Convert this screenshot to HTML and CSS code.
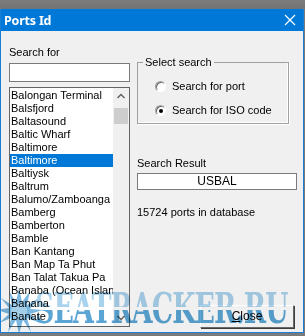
FILE: index.html
```html
<!DOCTYPE html>
<html>
<head>
<meta charset="utf-8">
<link rel="stylesheet" href="styles.css">
</head>
<body>
<div class="desk"></div>
<div class="window">
  <div class="titlebar">
    <span class="title">Ports Id</span>
    <svg class="close-x" width="12" height="12" viewBox="0 0 12 12"><path d="M1 1L11 11M11 1L1 11" stroke="#fff" stroke-width="1.2"/></svg>
  </div>
  <div class="content">
    <div class="left">
      <div class="label">Search for</div>
      <div class="textbox"></div>
      <div class="listbox">
        <div class="items">
          <div class="item">Balongan Terminal</div>
          <div class="item">Balsfjord</div>
          <div class="item">Baltasound</div>
          <div class="item">Baltic Wharf</div>
          <div class="item">Baltimore</div>
          <div class="item sel">Baltimore</div>
          <div class="item">Baltiysk</div>
          <div class="item">Baltrum</div>
          <div class="item">Balumo/Zamboanga</div>
          <div class="item">Bamberg</div>
          <div class="item">Bamberton</div>
          <div class="item">Bamble</div>
          <div class="item">Ban Kantang</div>
          <div class="item">Ban Map Ta Phut</div>
          <div class="item">Ban Talat Takua Pa</div>
          <div class="item">Banaba (Ocean Islan</div>
          <div class="item">Banana</div>
          <div class="item">Banate</div>
        </div>
        <div class="scrollbar">
          <svg class="arrow" width="16" height="16" viewBox="0 0 16 16"><path d="M4.5 9.5L8 6L11.5 9.5" fill="none" stroke="#606060" stroke-width="1.4"/></svg>
          <div class="track"><div class="thumb"></div></div>
          <svg class="arrow" width="16" height="16" viewBox="0 0 16 16"><path d="M4.5 6.5L8 10L11.5 6.5" fill="none" stroke="#606060" stroke-width="1.4"/></svg>
        </div>
      </div>
    </div>
    <div class="right">
      <fieldset class="group">
        <legend>Select search</legend>
        <div class="radio-row"><span class="radio"></span>Search for port</div>
        <div class="radio-row"><span class="radio on"></span>Search for ISO code</div>
      </fieldset>
      <div class="label result-label">Search Result</div>
      <div class="resultbox">USBAL</div>
      <div class="count">15724 ports in database</div>
      <div class="btn-row"><div class="button"><u>C</u>lose</div></div>
    </div>
  </div>
  <div class="watermark">
    <svg class="star" width="46" height="50" viewBox="0 0 46 50">
      <polygon fill="#5ba6d6" points="22,2 25,16 33,5 30,19 42,12 33,23 46,24 33,28 43,37 30,32 34,46 26,34 22,48 19,34 11,46 14,32 2,37 12,28 0,24 12,22 4,12 15,19 12,5 19,16"/>
      <circle cx="22" cy="25" r="8" fill="#8cc3e6"/>
    </svg>
    <span class="wm-text">SEATRACKER.RU</span>
  </div>
</div>
</body>
</html>
```
FILE: styles.css
```css
html, body {
  margin: 0;
  padding: 0;
}
body {
  width: 305px;
  height: 336px;
  overflow: hidden;
  background: #7a7a7a;
  font-family: "Liberation Sans", Arial, sans-serif;
  font-size: 11px;
  color: #000;
}
.desk {
  height: 9px;
  background: linear-gradient(#7c7c7c, #747474);
}
.window {
  position: relative;
  width: 302px;
  height: 323px;
  border: 1px solid #1a7fd4;
  border-top: none;
  background: #f0f0f0;
  display: flex;
  flex-direction: column;
  overflow: hidden;
}
.titlebar {
  height: 22px;
  background: #0078d7;
  display: flex;
  align-items: center;
  justify-content: space-between;
  padding: 0 6px 0 3px;
}
.title {
  color: #fff;
  font-family: "Noto Sans", "Open Sans", sans-serif;
  font-weight: bold;
  font-size: 12.5px;
  letter-spacing: -0.2px;
}
.close-x {
  margin-right: 1px;
}
.content {
  display: flex;
  gap: 7px;
  padding: 0 0 0 8px;
  flex: 1;
}
.left {
  width: 121px;
  display: flex;
  flex-direction: column;
}
.label {
  height: 13px;
  line-height: 13px;
}
.left .label {
  margin-top: 15px;
}
.textbox {
  margin-top: 4px;
  height: 17px;
  border: 1px solid #7a7a7a;
  background: #fff;
}
.listbox {
  margin-top: 5px;
  height: 237px;
  border: 1px solid #646464;
  background: #fff;
  display: flex;
  padding-top: 1px;
  overflow: hidden;
}
.items {
  flex: 1;
  overflow: hidden;
}
.item {
  height: 13px;
  line-height: 13px;
  padding-left: 1px;
  white-space: nowrap;
}
.item.sel {
  background: #0078d7;
  color: #fff;
}
.scrollbar {
  width: 16px;
  background: #f0f0f0;
  display: flex;
  flex-direction: column;
  margin-top: -1px;
}
.arrow {
  display: block;
  height: 17px;
}
.track {
  flex: 1;
}
.thumb {
  margin: 3px 1px 0 1px;
  height: 16px;
  background: #cdcdcd;
}
.right {
  width: 160px;
  display: flex;
  flex-direction: column;
}
.group {
  margin: 25px 0 0 0;
  width: 150px;
  height: 66px;
  border: 1px solid #a0a0a0;
  box-shadow: inset -1px -1px 0 #fff, 1px 1px 0 #fff;
  padding: 0;
  box-sizing: content-box;
}
.group legend {
  margin-left: 5px;
  padding: 0 2px;
  line-height: 13px;
}
.radio-row {
  display: flex;
  align-items: center;
  height: 13px;
  line-height: 13px;
  padding-left: 17px;
  margin-top: 11px;
}
.radio-row + .radio-row {
  margin-top: 11px;
}
.radio {
  width: 11px;
  height: 11px;
  border-radius: 50%;
  box-sizing: border-box;
  background: #fff;
  border: 1px solid;
  border-color: #a0a0a0 #fff #fff #a0a0a0;
  box-shadow: inset 1px 1px 0 #696969;
  margin-right: 6px;
  position: relative;
}
.radio.on::after {
  content: "";
  position: absolute;
  left: 3px;
  top: 3px;
  width: 4px;
  height: 4px;
  border-radius: 50%;
  background: #000;
}
.result-label {
  margin-top: 33px;
}
.resultbox {
  margin-top: 3px;
  height: 15px;
  border: 1px solid #7a7a7a;
  background: #fff;
  text-align: center;
  line-height: 15px;
  font-size: 12px;
}
.count {
  margin-top: 16px;
  line-height: 13px;
}
.btn-row {
  margin-top: auto;
  margin-bottom: 4px;
  display: flex;
  justify-content: flex-end;
  padding-right: 3px;
}
.button {
  width: 92px;
  height: 21px;
  line-height: 21px;
  text-align: center;
  background: #f0f0f0;
  border: 1px solid;
  border-color: #fff #696969 #696969 #fff;
  box-shadow: 1px 1px 0 #3c3c3c;
  font-size: 12px;
}
.watermark {
  position: absolute;
  left: -4px;
  bottom: -4px;
  width: 400px;
  display: flex;
  align-items: flex-end;
  pointer-events: none;
  mix-blend-mode: multiply;
}
.star {
  flex-shrink: 0;
  opacity: 0.8;
}
.wm-text {
  flex-shrink: 0;
  white-space: nowrap;
  display: inline-block;
  font-family: "DejaVu Serif", "Liberation Serif", serif;
  font-weight: bold;
  font-size: 42px;
  line-height: 42px;
  letter-spacing: -1.5px;
  transform: scaleX(0.64);
  transform-origin: left bottom;
  margin-left: -8px;
  margin-bottom: 6px;
  background: linear-gradient(#a9d2ec 0%, #a9d2ec 46%, #ffffff 46%, #ffffff 52%, #5aa5d4 52%, #5aa5d4 100%);
  -webkit-background-clip: text;
  background-clip: text;
  color: transparent;
}
```
